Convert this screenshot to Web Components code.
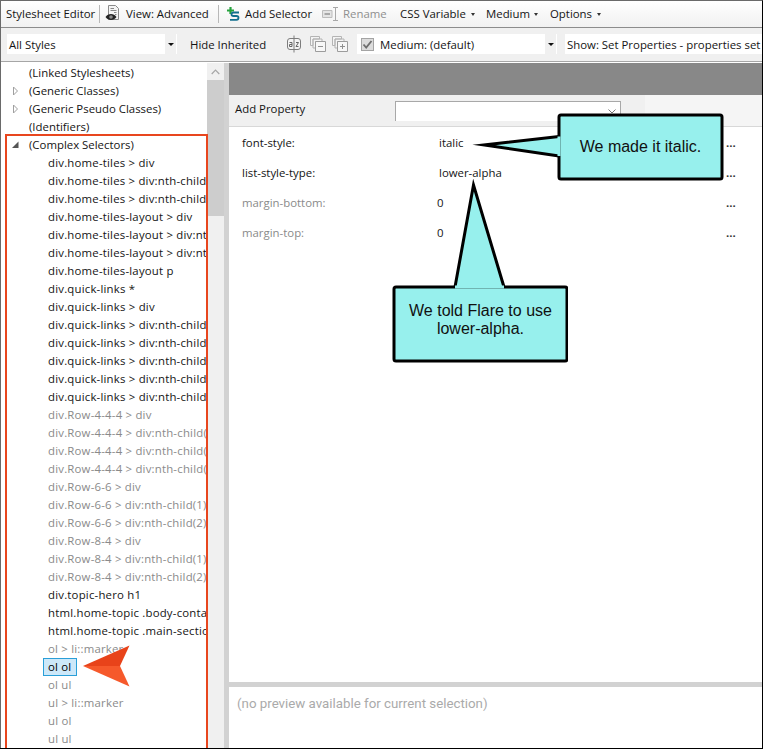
<!DOCTYPE html>
<html>
<head>
<meta charset="utf-8">
<title>Stylesheet Editor</title>
<style>
  html, body { margin: 0; padding: 0; background: #fff; }
  body { font: 11.4px "Open Sans", sans-serif; color: #141414; overflow: hidden; }
</style>
</head>
<body>
<app-window>
  <main-toolbar slot="top"></main-toolbar>
  <filter-toolbar slot="top"></filter-toolbar>
  <selector-tree slot="left"></selector-tree>
  <property-pane slot="right"></property-pane>
</app-window>

<script>
function makeTemplate(html) {
  const t = document.createElement("template");
  t.innerHTML = html;
  return t;
}

const windowTemplate = makeTemplate(`
<style>
  :host { display: block; position: relative; width: 763px; height: 749px; box-sizing: border-box;
    border-top: 1px solid #6a6a6a; border-right: 1px solid #000; border-bottom: 1px solid #000; overflow: hidden; }
  :host::after { content: ""; position: absolute; left: 0; top: 0; width: 1px; height: 100%; background: #6a6a6a; }
  .main { display: flex; height: 685px; }
  .split { width: 5px; background: #d2d2d2; }
  .left { width: 224px; display: block; }
  .right { flex: 1; min-width: 0; }
  .red { position: absolute; left: 5px; top: 133px; width: 199px; height: 700px; border: 2px solid #e8461e; pointer-events: none; }
  .arrow { position: absolute; left: 80px; top: 643px; }
</style>
<slot name="top"></slot>
<div class="main">
  <div class="left"><slot name="left"></slot></div>
  <div class="split"></div>
  <div class="right"><slot name="right"></slot></div>
</div>
<div class="red"></div>
<svg class="arrow" width="52" height="44" viewBox="80 644 52 44">
  <path d="M83 666 L129.500 645.500 L120 666 Z" fill="#e8431a"/>
  <path d="M83 666 L120 666 L129.500 686.500 Z" fill="#f6592b"/>
</svg>
<call-out style="left:391px;top:178px" w="177" h="186" box="3,108,173,74" lift="8" tail="M64 108 L82.500 6 L113 108">We told Flare to use<br>lower-alpha.</call-out>
<call-out style="left:470px;top:112px" w="255" h="69" box="89,2,163,64" lift="0" tail="M89 23.500 L14 32 L89 43">We made it italic.</call-out>
`);

class AppWindow extends HTMLElement {
  constructor() {
    super();
    this.attachShadow({ mode: "open" }).append(windowTemplate.content.cloneNode(true));
  }
}

const mainBarTemplate = makeTemplate(`
<style>
  :host { display: flex; align-items: center; height: 26px; padding-bottom: 0; background: linear-gradient(#fff, #f1f1f1); border-bottom: 1px solid #8c8c8c; white-space: nowrap; }
  .sep { width: 1px; height: 18px; background: #b8b8b8; }
  span { display: block; margin-top: -2px; }
  .off { color: #8f8f8f; }
  svg { display: block; flex: none; }
  i { display: block; width: 0; height: 0; border: 2.5px solid transparent; border-top: 3px solid #333; border-bottom: 0; }
</style>
<span style="margin-left:6px;width:92px">Stylesheet Editor</span>
<div class="sep" style="margin-left:1px"></div>
<svg style="margin-left:5px" width="15" height="18" viewBox="0 0 15 18">
  <path d="M3.500 .5 H10.500 L13.500 3.500 V14.500 H3.500 Z" fill="#f4f4f4" stroke="#8a8a8a"/>
  <path d="M5.500 3.500 H9 M5.500 5.500 H11.500 M9 7.500 H11.500 M10 9.500 H11.500" stroke="#888" fill="none"/>
  <path d="M.5 12 C3 8 9 8 11.500 12 C9 16 3 16 .5 12 Z" fill="#222"/>
  <circle cx="6" cy="12" r="1.800" fill="#8a8a8a"/>
</svg>
<span style="margin-left:6px;width:92px">View: Advanced</span>
<div class="sep"></div>
<svg style="margin-left:8px" width="13" height="14" viewBox="0 0 13 14">
  <path d="M3.500 0 V7 M0 3.500 H7" stroke="#25a23d" stroke-width="2.200" fill="none"/>
  <path d="M12 5.500 H6.500 Q4.500 5.500 4.500 7.500 Q4.500 9 6.500 9 H9.500 Q11.500 9 11.500 10.800 Q11.500 12.800 9.500 12.800 H3" stroke="#126f8e" stroke-width="1.800" fill="none"/>
</svg>
<span style="margin-left:5px;width:77px">Add Selector</span>
<svg width="17" height="14" viewBox="0 0 17 14">
  <path d="M.5 3.500 H10 V10.500 H.5 Z" fill="#e4e4e4" stroke="#bcbcbc"/>
  <path d="M2.500 7 H8" stroke="#a8a8a8" stroke-width="2"/>
  <path d="M11 .5 H16 M13.500 .5 V13.500 M11 13.500 H16" stroke="#a8a8a8" fill="none"/>
</svg>
<span class="off" style="margin-left:4px;width:57px">Rename</span>
<span style="width:71px">CSS Variable</span><i></i>
<span style="margin-left:11px;width:44px">Medium</span><i style="margin-left:4px"></i>
<span style="margin-left:12px;width:43px">Options</span><i style="margin-left:4px"></i>
`);

class MainToolbar extends HTMLElement {
  constructor() {
    super();
    this.attachShadow({ mode: "open" }).append(mainBarTemplate.content.cloneNode(true));
  }
}

const filterBarTemplate = makeTemplate(`
<style>
  :host { display: flex; align-items: center; height: 35px; padding-bottom: 3px; background: #f0f0f0; box-shadow: inset 0 -1px 0 #fff, inset 0 -2px 0 #a6a6a6; white-space: nowrap; box-sizing: border-box; }
  .combo { display: flex; align-items: center; height: 20px; background: #fff; }
  .combo .btn { margin-left: auto; width: 11px; height: 20px; background: #f0f0f0; display: flex; align-items: center; justify-content: center; margin-right: 1px; }
  .combo .btn::after { content: ""; border: 3px solid transparent; border-top: 3px solid #111; border-bottom: 0; }
  svg { display: block; flex: none; }
</style>
<div class="combo" style="margin-left:7px;width:170px"><span style="margin-left:2px">All Styles</span><div class="btn"></div></div>
<span style="margin-left:13px;width:96px">Hide Inherited</span>
<svg width="16" height="18" viewBox="0 0 16 18">
  <path d="M4 3.500 H12 Q14.500 3.500 14.500 6 V12 Q14.500 14.500 12 14.500 H4 Q1.500 14.500 1.500 12 V6 Q1.500 3.500 4 3.500 Z" fill="#f4f4f4" stroke="#7c7c7c"/>
  <path d="M8 .5 V17.500" stroke="#7c7c7c"/>
  <path d="M3.500 7.500 H6 V11.500 H3.500 V9.500 H6 M10 7.500 H12.500 L10 11.500 H12.500" stroke="#666" fill="none"/>
</svg>
<svg style="margin-left:8px" width="16" height="16" viewBox="0 0 16 16">
  <path d="M.5 .5 H9.500 V3 H3 V9.500 H.5 Z M3 3 H12 V5.500 H5.500 V12 H3 Z" fill="#f4f4f4" stroke="#b4b4b4"/>
  <path d="M5.500 5.500 H15.500 V15.500 H5.500 Z" fill="#f7f7f7" stroke="#9c9c9c"/>
  <path d="M8 10.500 H13" stroke="#909090"/>
</svg>
<svg style="margin-left:6px" width="16" height="16" viewBox="0 0 16 16">
  <path d="M.5 .5 H9.500 V3 H3 V9.500 H.5 Z M3 3 H12 V5.500 H5.500 V12 H3 Z" fill="#f4f4f4" stroke="#b4b4b4"/>
  <path d="M5.500 5.500 H15.500 V15.500 H5.500 Z" fill="#f7f7f7" stroke="#9c9c9c"/>
  <path d="M8 10.500 H13 M10.500 8 V13" stroke="#909090"/>
</svg>
<div class="combo" style="margin-left:9px;width:200px">
  <svg style="margin-left:4px" width="13" height="13" viewBox="0 0 13 13">
    <rect x=".5" y=".5" width="12" height="12" fill="#dcdcdc" stroke="#a4a4a4"/>
    <path d="M2.500 6.500 L5.200 9.500 L10.500 3" fill="none" stroke="#6e6e6e" stroke-width="1.800"/>
  </svg>
  <span style="margin-left:6px">Medium: (default)</span><div class="btn"></div>
</div>
<div class="combo" style="margin-left:8px;width:197px;overflow:hidden"><span style="margin-left:2px">Show: Set Properties - properties set</span></div>
`);

class FilterToolbar extends HTMLElement {
  constructor() {
    super();
    this.attachShadow({ mode: "open" }).append(filterBarTemplate.content.cloneNode(true));
  }
}

const treeRowTemplate = makeTemplate(`
<style>
  :host { display: block; height: 18px; line-height: 18px; white-space: nowrap; overflow: hidden; box-sizing: border-box; padding-left: 29px; position: relative; }
  :host([level="2"]) { padding-left: 48px; letter-spacing: .2px; }
  :host([dim]) { color: #8a8a8a; }
  :host([selected]) { color: #000; }
  :host([selected]) .label { background: #cde8f9; outline: 1px solid #2a9fd8; outline-offset: -1px; padding: 0 6px 0 5px; margin-left: -5px; display: inline-block; height: 18px; }
  svg { position: absolute; left: 11px; top: 4px; }
</style>
<span class="label"><slot></slot></span>
`);

class TreeRow extends HTMLElement {
  constructor() {
    super();
    this.attachShadow({ mode: "open" }).append(treeRowTemplate.content.cloneNode(true));
  }
  connectedCallback() {
    const twisty = this.getAttribute("twisty");
    if (twisty === "closed") {
      this.shadowRoot.innerHTML += `<svg width="8" height="10" viewBox="0 0 8 10"><path d="M2.500 1 L6.500 5 L2.500 9 Z" fill="#fff" stroke="#a0a0a0"/></svg>`;
    } else if (twisty === "open") {
      this.shadowRoot.innerHTML += `<svg width="9" height="10" viewBox="0 0 9 10"><path d="M1 8 L7.500 8 L7.500 1.500 Z" fill="#555"/></svg>`;
    }
  }
}

const treeTemplate = makeTemplate(`
<style>
  :host { display: flex; height: 685px; background: #fff; }
  .list { width: 207px; padding-top: 1px; overflow: hidden; box-sizing: border-box; }
  .bar { width: 17px; background: #f0f0f0; position: relative; }
  .up { height: 17px; display: flex; align-items: center; justify-content: center; }
  .thumb { height: 136px; background: #cdcdcd; }
</style>
<div class="list"><slot></slot></div>
<div class="bar">
  <div class="up"><svg width="9" height="6" viewBox="0 0 9 6"><path d="M.7 5 L4.500 1 L8.300 5" fill="none" stroke="#a6a6a6" stroke-width="1.200"/></svg></div>
  <div class="thumb"></div>
</div>
`);

class SelectorTree extends HTMLElement {
  constructor() {
    super();
    this.attachShadow({ mode: "open" }).append(treeTemplate.content.cloneNode(true));
    const rows = [
      ["(Linked Stylesheets)", 1],
      ["(Generic Classes)", 1, "closed"],
      ["(Generic Pseudo Classes)", 1, "closed"],
      ["(Identifiers)", 1],
      ["(Complex Selectors)", 1, "open"],
      ["div.home-tiles > div", 2],
      ["div.home-tiles > div:nth-child(1)", 2],
      ["div.home-tiles > div:nth-child(2)", 2],
      ["div.home-tiles-layout > div", 2],
      ["div.home-tiles-layout > div:nth-child(1)", 2],
      ["div.home-tiles-layout > div:nth-child(2)", 2],
      ["div.home-tiles-layout p", 2],
      ["div.quick-links *", 2],
      ["div.quick-links > div", 2],
      ["div.quick-links > div:nth-child(1)", 2],
      ["div.quick-links > div:nth-child(2)", 2],
      ["div.quick-links > div:nth-child(3)", 2],
      ["div.quick-links > div:nth-child(4)", 2],
      ["div.quick-links > div:nth-child(5)", 2],
      ["div.Row-4-4-4 > div", 2, "", "dim"],
      ["div.Row-4-4-4 > div:nth-child(1)", 2, "", "dim"],
      ["div.Row-4-4-4 > div:nth-child(2)", 2, "", "dim"],
      ["div.Row-4-4-4 > div:nth-child(3)", 2, "", "dim"],
      ["div.Row-6-6 > div", 2, "", "dim"],
      ["div.Row-6-6 > div:nth-child(1)", 2, "", "dim"],
      ["div.Row-6-6 > div:nth-child(2)", 2, "", "dim"],
      ["div.Row-8-4 > div", 2, "", "dim"],
      ["div.Row-8-4 > div:nth-child(1)", 2, "", "dim"],
      ["div.Row-8-4 > div:nth-child(2)", 2, "", "dim"],
      ["div.topic-hero h1", 2],
      ["html.home-topic .body-container", 2],
      ["html.home-topic .main-section", 2],
      ["ol > li::marker", 2, "", "dim"],
      ["ol ol", 2, "", "selected"],
      ["ol ul", 2, "", "dim"],
      ["ul > li::marker", 2, "", "dim"],
      ["ul ol", 2, "", "dim"],
      ["ul ul", 2, "", "dim"],
    ];
    for (const [text, level, twisty, flag] of rows) {
      const row = document.createElement("tree-row");
      row.setAttribute("level", level);
      if (twisty) row.setAttribute("twisty", twisty);
      if (flag) row.setAttribute(flag, "");
      row.textContent = text;
      this.append(row);
    }
  }
}

const propRowTemplate = makeTemplate(`
<style>
  :host { display: flex; height: 30px; align-items: center; white-space: nowrap; }
  .name { width: 197px; margin-left: 13px; }
  :host([dim]) .name { color: #8a8a8a; width: 195px; }
  .value { width: 287px; }
  :host([dim]) .value { width: 289px; }
  .dots { color: #333; font-weight: 700; }
</style>
<span class="name"><slot name="name"></slot></span>
<span class="value"><slot></slot></span>
<span class="dots">...</span>
`);

class PropRow extends HTMLElement {
  constructor() {
    super();
    this.attachShadow({ mode: "open" }).append(propRowTemplate.content.cloneNode(true));
  }
}

const paneTemplate = makeTemplate(`
<style>
  :host { display: flex; flex-direction: column; height: 685px; background: #fff; }
  .head { height: 32px; background: #888; }
  .add { height: 31px; display: flex; align-items: center; border-bottom: 1px solid #d8d8d8;
    background: linear-gradient(to right, #f0f0f0 416px, #f5f5f5 416px); }
  .add span { margin: 0 0 4px 6px; width: 160px; }
  .combo { width: 224px; height: 19px; background: #fff; border: 1px solid #a8a8a8; border-bottom: 0; position: relative; align-self: flex-start; margin-top: 6px; }
  .combo svg { position: absolute; right: 4px; top: 7px; }
  .rows { flex: 1; }
  .split { height: 5px; background: #d2d2d2; }
  .preview { height: 61px; padding: 9px 0 0 8px; box-sizing: border-box; font: 13.3px Roboto, sans-serif; color: #aaa; }
</style>
<div class="head"></div>
<div class="add">
  <span>Add Property</span>
  <div class="combo"><svg width="8" height="5" viewBox="0 0 8 5"><path d="M.5 .5 L4 4 L7.500 .5" fill="none" stroke="#777"/></svg></div>
</div>
<div class="rows">
  <prop-row><span slot="name">font-style:</span>italic</prop-row>
  <prop-row><span slot="name">list-style-type:</span>lower-alpha</prop-row>
  <prop-row dim><span slot="name">margin-bottom:</span>0</prop-row>
  <prop-row dim><span slot="name">margin-top:</span>0</prop-row>
</div>
<div class="split"></div>
<div class="preview">(no preview available for current selection)</div>
`);

class PropertyPane extends HTMLElement {
  constructor() {
    super();
    this.attachShadow({ mode: "open" }).append(paneTemplate.content.cloneNode(true));
  }
}

// annotation drawn on top of the screenshot: rounded box, speech tail and text
class CallOut extends HTMLElement {
  constructor() {
    super();
    this.attachShadow({ mode: "open" });
  }
  connectedCallback() {
    const w = this.getAttribute("w");
    const h = this.getAttribute("h");
    const lift = this.getAttribute("lift");
    const [x, y, bw, bh] = this.getAttribute("box").split(",").map(Number);
    const tail = this.getAttribute("tail");
    const pts = tail.replace(/^M/, "").split(" L").map(s => s.split(" ").map(Number));
    this.shadowRoot.innerHTML = `
      <style>
        :host { position: absolute; display: block; width: ${w}px; height: ${h}px; }
        svg { position: absolute; left: 0; top: 0; }
        .text { position: absolute; left: ${x}px; top: ${y}px; width: ${bw}px; height: ${bh}px; box-sizing: border-box; padding-bottom: ${lift}px; display: flex; align-items: center; justify-content: center; text-align: center;
          font: 16px/18px "Liberation Sans", Arial, sans-serif; color: #111; }
      </style>
      <svg width="${w}" height="${h}">
        <rect x="${x}" y="${y}" width="${bw}" height="${bh}" rx="2" fill="#97f0ed" stroke="#000" stroke-width="3"/>
        <path d="${tail}" fill="#97f0ed" stroke="#000" stroke-width="3" stroke-miterlimit="12"/>
        <line x1="${pts[0][0]}" y1="${pts[0][1]}" x2="${pts[2][0]}" y2="${pts[2][1]}" stroke="#97f0ed" stroke-width="3"/>
      </svg>
      <div class="text"><div><slot></slot></div></div>`;
  }
}

customElements.define("app-window", AppWindow);
customElements.define("main-toolbar", MainToolbar);
customElements.define("filter-toolbar", FilterToolbar);
customElements.define("tree-row", TreeRow);
customElements.define("selector-tree", SelectorTree);
customElements.define("prop-row", PropRow);
customElements.define("property-pane", PropertyPane);
customElements.define("call-out", CallOut);
</script>
</body>
</html>
